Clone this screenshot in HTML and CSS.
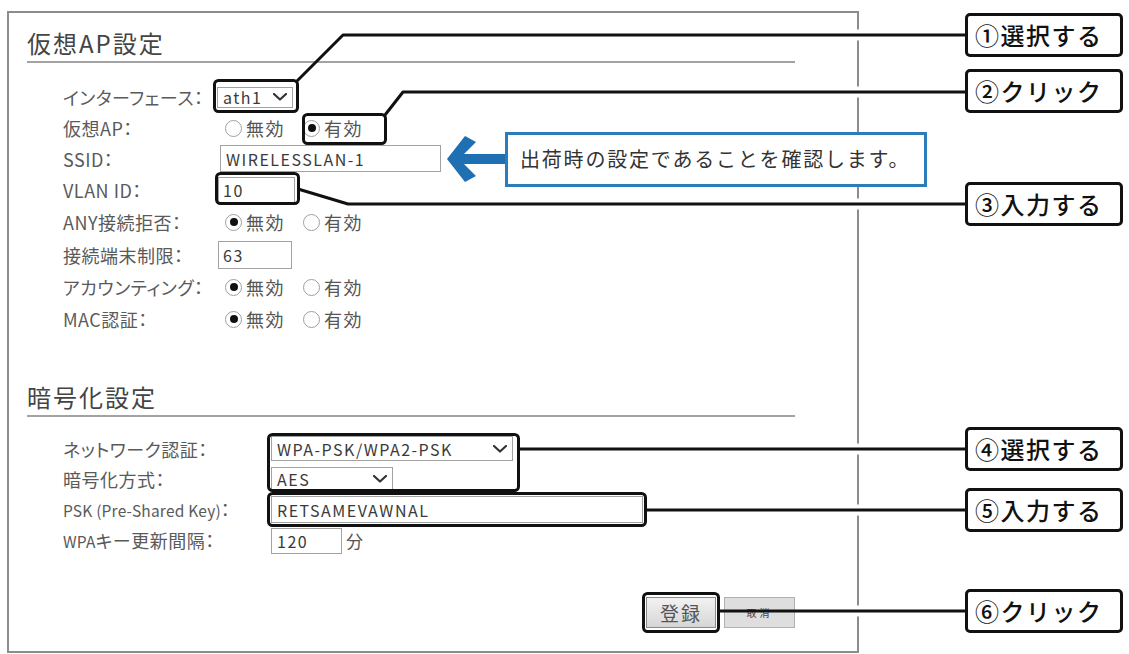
FILE: index.html
```html
<!DOCTYPE html>
<html lang="ja">
<head>
<meta charset="utf-8">
<title>仮想AP設定</title>
<link rel="stylesheet" href="styles.css">
</head>
<body>
<div class="page">
  <div class="panel">
    <section class="sec">
      <h2 class="sec-title">仮想AP設定</h2>
      <div class="form form1">
        <div class="lbl">インターフェース：</div>
        <div class="ctl"><div class="select sel-if"><span class="val">ath1</span><svg class="chev" viewBox="0 0 14 8" width="14" height="8"><path d="M1 1 L7 6.5 L13 1"/></svg></div></div>

        <div class="lbl">仮想AP：</div>
        <div class="ctl radios"><span class="radio"></span><span class="rtxt">無効</span><span class="radio on"></span><span class="rtxt">有効</span></div>

        <div class="lbl">SSID：</div>
        <div class="ctl"><div class="input in-ssid">WIRELESSLAN-1</div></div>

        <div class="lbl">VLAN ID：</div>
        <div class="ctl"><div class="input in-vlan">10</div></div>

        <div class="lbl">ANY接続拒否：</div>
        <div class="ctl radios"><span class="radio on"></span><span class="rtxt">無効</span><span class="radio"></span><span class="rtxt">有効</span></div>

        <div class="lbl">接続端末制限：</div>
        <div class="ctl"><div class="input in-limit">63</div></div>

        <div class="lbl">アカウンティング：</div>
        <div class="ctl radios"><span class="radio on"></span><span class="rtxt">無効</span><span class="radio"></span><span class="rtxt">有効</span></div>

        <div class="lbl">MAC認証：</div>
        <div class="ctl radios"><span class="radio on"></span><span class="rtxt">無効</span><span class="radio"></span><span class="rtxt">有効</span></div>
      </div>
    </section>

    <section class="sec sec2">
      <h2 class="sec-title">暗号化設定</h2>
      <div class="form form2">
        <div class="lbl">ネットワーク認証：</div>
        <div class="ctl"><div class="select sel-auth"><span class="val">WPA-PSK/WPA2-PSK</span><svg class="chev" viewBox="0 0 14 8" width="14" height="8"><path d="M1 1 L7 6.5 L13 1"/></svg></div></div>

        <div class="lbl">暗号化方式：</div>
        <div class="ctl"><div class="select sel-enc"><span class="val">AES</span><svg class="chev" viewBox="0 0 14 8" width="14" height="8"><path d="M1 1 L7 6.5 L13 1"/></svg></div></div>

        <div class="lbl"><span class="lat">PSK (Pre-Shared Key)</span>：</div>
        <div class="ctl"><div class="input in-psk">RETSAMEVAWNAL</div></div>

        <div class="lbl"><span class="lat">WPA</span>キー更新間隔：</div>
        <div class="ctl"><div class="input in-int">120</div><span class="unit">分</span></div>
      </div>
    </section>

    <div class="buttons">
      <button class="btn btn-main">登録</button>
      <button class="btn btn-sub">取消</button>
    </div>
  </div>

  <svg class="marks" width="1129" height="654" viewBox="0 0 1129 654">
    <g class="halo">
      <path d="M830 35 H900 M830 92 H900 M830 204 H900 M830 449 H900 M830 510 H900 M830 611 H900"/>
    </g>
    <g class="hl">
      <rect x="214.5" y="80.5" width="83" height="31" rx="4"/>
      <rect x="303.5" y="114.5" width="82" height="29" rx="4"/>
      <rect x="216.5" y="173.5" width="82" height="30" rx="4"/>
      <rect x="268.5" y="434.5" width="250" height="56" rx="4"/>
      <rect x="268.5" y="493.5" width="377" height="32" rx="4"/>
      <rect x="643.5" y="593.5" width="75" height="38" rx="4"/>
    </g>
    <g class="lines">
      <path d="M297 81 L343 35 H966"/>
      <path d="M385 115 L403 92 H966"/>
      <path d="M298 189 L348 204 H966"/>
      <path d="M520 449 H966"/>
      <path d="M647 510 H966"/>
      <path d="M720 611 H966"/>
    </g>
    <polygon class="arrow" points="447,159 465,136 476,142 464,154 507,154 507,164 464,164 476,176 465,182"/>
  </svg>

  <div class="note">出荷時の設定であることを確認します。</div>

  <div class="callout c1">①選択する</div>
  <div class="callout c2">②クリック</div>
  <div class="callout c3">③入力する</div>
  <div class="callout c4">④選択する</div>
  <div class="callout c5">⑤入力する</div>
  <div class="callout c6">⑥クリック</div>
</div>
</body>
</html>
```

FILE: styles.css
```css
html, body {
  margin: 0;
  padding: 0;
  background: #fff;
}
body {
  font-family: "Noto Sans CJK JP", "Noto Sans", sans-serif;
  color: #555;
}
.page {
  position: relative;
  width: 1129px;
  height: 654px;
  overflow: hidden;
}
.panel {
  margin: 11px 0 0 7px;
  width: 848px;
  border: 2px solid #8c8c8c;
  padding-bottom: 23px;
}
.sec-title {
  margin: 15px 0 0 18px;
  width: 768px;
  height: 30px;
  line-height: 30px;
  padding-bottom: 3px;
  border-bottom: 2px solid #a3a3a3;
  font-size: 24px;
  font-weight: 400;
  letter-spacing: 2px;
  color: #444;
}
.sec2 .sec-title {
  margin-top: 47px;
}
.form {
  display: grid;
  margin-left: 54px;
  align-items: center;
}
.form1 {
  margin-top: 18.5px;
  grid-template-columns: 154px 1fr;
  grid-template-rows: 31px 31px 30px 32px 33px 32px 33px 31px;
}
.form2 {
  margin-top: 17px;
  grid-template-columns: 208px 1fr;
  grid-template-rows: 30px 30px 32px 30px;
}
.lbl {
  font-size: 18px;
  line-height: 24px;
  letter-spacing: 0.5px;
  font-feature-settings: "palt";
  white-space: nowrap;
  color: #5a5a5a;
}
.lat {
  font-size: 15.5px;
  letter-spacing: 0.2px;
}
.ctl {
  display: flex;
  align-items: center;
}
.select, .input {
  box-sizing: border-box;
  display: flex;
  align-items: center;
  border: 1px solid #a2a2a2;
  background: #fff;
  font-size: 16px;
  letter-spacing: 1.5px;
  color: #3a3a3a;
  padding-left: 5px;
  white-space: nowrap;
}
.select .val {
  flex: 1;
}
.chev {
  margin-right: 5px;
}
.chev path {
  fill: none;
  stroke: #333;
  stroke-width: 2.2;
  stroke-linecap: round;
  stroke-linejoin: round;
}
.sel-if { width: 76px; height: 21px; }
.sel-auth { width: 242px; height: 25px; }
.sel-enc { width: 122px; height: 24px; }
.in-ssid { width: 221px; height: 27px; margin-left: 3px; }
.in-vlan { width: 77px; height: 26px; margin-left: 1px; padding-left: 4px; }
.in-limit { width: 74px; height: 28px; margin-left: 1px; padding-left: 4px; }
.in-psk { width: 372px; height: 27px; }
.in-int { width: 71px; height: 26px; }
.unit {
  margin-left: 4px;
  font-size: 17px;
  color: #555;
}
.radios {
  padding-left: 8px;
}
.radio {
  box-sizing: border-box;
  width: 17px;
  height: 17px;
  border: 1.5px solid #a0a0a0;
  border-radius: 50%;
  background: #fff;
  display: flex;
  align-items: center;
  justify-content: center;
  margin-right: 4px;
}
.radio.on::after {
  content: "";
  width: 8px;
  height: 8px;
  border-radius: 50%;
  background: #111;
}
.rtxt {
  font-size: 18px;
  letter-spacing: 1.5px;
  margin-right: 18px;
  color: #555;
}
.buttons {
  display: flex;
  justify-content: flex-end;
  gap: 8px;
  margin-top: 41px;
  padding-right: 62px;
}
.btn {
  box-sizing: border-box;
  height: 31px;
  margin: 0;
  padding: 0;
  font-family: "Noto Sans CJK JP", "Noto Sans", sans-serif;
}
.btn-main {
  width: 70px;
  border: 1px solid #8a8a8a;
  background: linear-gradient(#f2f2f2, #d6d6d6);
  font-size: 19px;
  letter-spacing: 2px;
  color: #555;
}
.btn-sub {
  width: 71px;
  border: 1px solid #b0b0b0;
  background: #dedede;
  font-size: 10px;
  letter-spacing: 3px;
  color: #444;
}
.marks {
  position: absolute;
  left: 0;
  top: 0;
  pointer-events: none;
}
.halo path {
  fill: none;
  stroke: #fff;
  stroke-width: 11;
}
.hl rect {
  fill: none;
  stroke: #111;
  stroke-width: 3;
}
.lines path {
  fill: none;
  stroke: #111;
  stroke-width: 3;
  stroke-linejoin: round;
}
.arrow {
  fill: #1f6fb3;
}
.note {
  position: absolute;
  left: 505px;
  top: 132px;
  width: 422px;
  height: 55px;
  box-sizing: border-box;
  border: 3px solid #2b7cb9;
  background: #fff;
  padding-left: 12px;
  font-size: 20px;
  letter-spacing: 1.8px;
  line-height: 48px;
  color: #333;
  white-space: nowrap;
}
.callout {
  position: absolute;
  left: 965px;
  width: 158px;
  height: 44px;
  box-sizing: border-box;
  border: 3px solid #111;
  border-radius: 5px;
  background: #fff;
  padding-left: 7px;
  font-size: 24px;
  letter-spacing: 1.5px;
  line-height: 37px;
  font-weight: 500;
  color: #111;
  white-space: nowrap;
}
.c1 { top: 13px; }
.c2 { top: 69px; }
.c3 { top: 182px; }
.c4 { top: 427px; }
.c5 { top: 488px; }
.c6 { top: 589px; }
```
